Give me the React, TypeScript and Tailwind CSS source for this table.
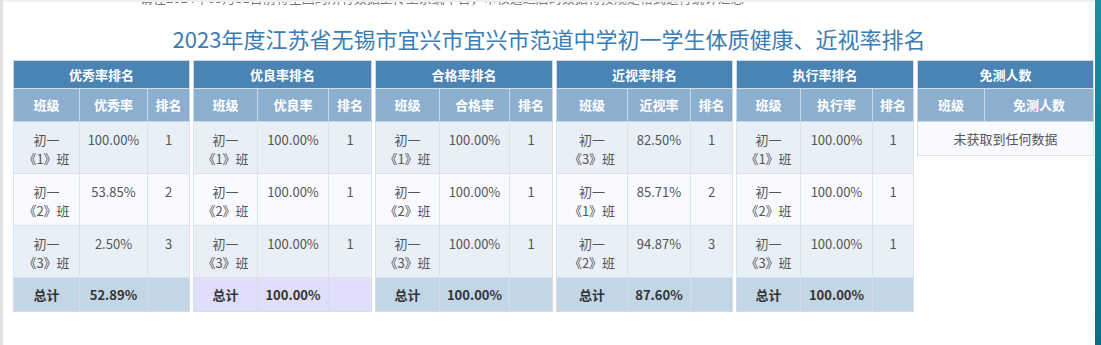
import React from "react"

type Row = { cls: [string, string]; rate: string; rank: string }

type Board = {
  title: string
  rateLabel: string
  widths: number[]
  rows: Row[]
  total: string
  totalBg: string
}

const cls1: [string, string] = ["初一", "《1》班"]
const cls2: [string, string] = ["初一", "《2》班"]
const cls3: [string, string] = ["初一", "《3》班"]

const boards: Board[] = [
  {
    title: "优秀率排名",
    rateLabel: "优秀率",
    widths: [66, 68, 42],
    rows: [
      { cls: cls1, rate: "100.00%", rank: "1" },
      { cls: cls2, rate: "53.85%", rank: "2" },
      { cls: cls3, rate: "2.50%", rank: "3" },
    ],
    total: "52.89%",
    totalBg: "bg-[#c3d6e5]",
  },
  {
    title: "优良率排名",
    rateLabel: "优良率",
    widths: [64, 71, 43],
    rows: [
      { cls: cls1, rate: "100.00%", rank: "1" },
      { cls: cls2, rate: "100.00%", rank: "1" },
      { cls: cls3, rate: "100.00%", rank: "1" },
    ],
    total: "100.00%",
    totalBg: "bg-[#e0defb]",
  },
  {
    title: "合格率排名",
    rateLabel: "合格率",
    widths: [64, 70, 43],
    rows: [
      { cls: cls1, rate: "100.00%", rank: "1" },
      { cls: cls2, rate: "100.00%", rank: "1" },
      { cls: cls3, rate: "100.00%", rank: "1" },
    ],
    total: "100.00%",
    totalBg: "bg-[#c3d6e5]",
  },
  {
    title: "近视率排名",
    rateLabel: "近视率",
    widths: [71, 63, 42],
    rows: [
      { cls: cls3, rate: "82.50%", rank: "1" },
      { cls: cls1, rate: "85.71%", rank: "2" },
      { cls: cls2, rate: "94.87%", rank: "3" },
    ],
    total: "87.60%",
    totalBg: "bg-[#c3d6e5]",
  },
  {
    title: "执行率排名",
    rateLabel: "执行率",
    widths: [64, 72, 41],
    rows: [
      { cls: cls1, rate: "100.00%", rank: "1" },
      { cls: cls2, rate: "100.00%", rank: "1" },
      { cls: cls3, rate: "100.00%", rank: "1" },
    ],
    total: "100.00%",
    totalBg: "bg-[#c3d6e5]",
  },
]

const th1 = "h-[28px] bg-[#4a84b5] text-white font-bold text-[13px] border border-[#d3dce6] p-0"
const th2 = "h-[33px] bg-[#8cafd0] text-white font-bold text-[13px] border border-[#c9d7e4] p-0"
const td = "h-[52px] align-top pt-[8px] px-[2px] border border-[#dde2e8] text-[#555] text-[13px] leading-[19px]"
const tdTotal = "h-[34px] border border-[#d6dde5] text-[#333] font-bold text-[13px]"

function Cols({ widths }: { widths: number[] }) {
  return (
    <colgroup>
      {widths.map((w, i) => (
        <col key={i} style={{ width: w }} />
      ))}
    </colgroup>
  )
}

function RankTable({ b }: { b: Board }) {
  const width = b.widths.reduce((a, c) => a + c, 0)
  return (
    <div className="shrink-0" style={{ width }}>
      <table className="w-full table-fixed border-collapse text-center">
        <Cols widths={b.widths} />
        <thead>
          <tr>
            <th colSpan={3} className={th1}>{b.title}</th>
          </tr>
          <tr>
            <th className={th2}>班级</th>
            <th className={th2}>{b.rateLabel}</th>
            <th className={th2}>排名</th>
          </tr>
        </thead>
        <tbody>
          {b.rows.map((r, i) => (
            <tr key={i} className={i % 2 === 0 ? "bg-[#e8eff7]" : "bg-[#f8faff]"}>
              <td className={td}>
                {r.cls[0]}
                <br />
                {r.cls[1]}
              </td>
              <td className={td}>{r.rate}</td>
              <td className={td}>{r.rank}</td>
            </tr>
          ))}
          <tr className={b.totalBg}>
            <td className={tdTotal}>总计</td>
            <td className={tdTotal}>{b.total}</td>
            <td className={tdTotal}></td>
          </tr>
        </tbody>
      </table>
    </div>
  )
}

function ExemptTable() {
  return (
    <div className="shrink-0 w-[176px]">
      <table className="w-full table-fixed border-collapse text-center">
        <Cols widths={[67, 109]} />
        <thead>
          <tr>
            <th colSpan={2} className={th1}>免测人数</th>
          </tr>
          <tr>
            <th className={th2}>班级</th>
            <th className={th2}>免测人数</th>
          </tr>
        </thead>
        <tbody>
          <tr className="bg-[#f8faff]">
            <td colSpan={2} className="h-[34px] border border-[#dde2e8] text-[#555] text-[13px]">
              未获取到任何数据
            </td>
          </tr>
        </tbody>
      </table>
    </div>
  )
}

export default function App() {
  return (
    <div
      className="flex h-[345px] w-[1101px] bg-white overflow-hidden"
      style={{ fontFamily: '"Noto Sans CJK SC", "Noto Sans", sans-serif' }}
    >
      <div className="w-[3px] bg-[#e2e2e2]" />
      <div className="flex-1 flex flex-col border-t-2 border-[#efefef]">
        <div className="h-[4px] overflow-hidden pl-[137px]">
          <div className="-mt-[13px] text-[13px] leading-[18px] text-[#777] whitespace-nowrap">
            请在2024年03月31日前将全国的所有数据上传至系统平台，审核通过后的数据将按规定格式进行统计汇总
          </div>
        </div>
        <h1 className="pt-[18px] mb-[8px] h-[46px] text-center text-[22px] leading-[28px] text-[#3a7db5]">
          2023年度江苏省无锡市宜兴市宜兴市范道中学初一学生体质健康、近视率排名
        </h1>
        <div className="flex items-start gap-[4px] pl-[10px]">
          {boards.map((b) => (
            <RankTable key={b.title} b={b} />
          ))}
          <ExemptTable />
        </div>
      </div>
      <div className="w-[6px] bg-gradient-to-b from-[#1b8ea3] via-[#0b7f94] to-[#0a6d86]" />
    </div>
  )
}
